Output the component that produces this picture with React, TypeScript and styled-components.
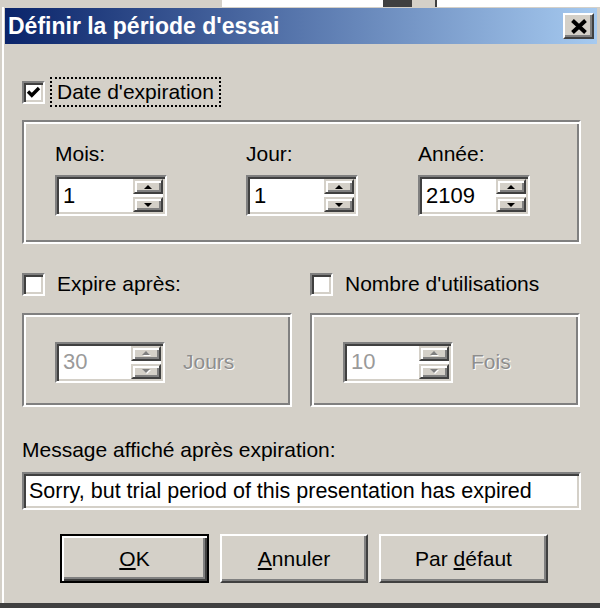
import styled, { createGlobalStyle, css } from 'styled-components';

const face = '#d4d0c8';
const shade = '#808080';
const darkShade = '#404040';
const uiFont = '"Liberation Sans", Arial, sans-serif';

const GlobalStyle = createGlobalStyle`
  html, body {
    margin: 0;
    padding: 0;
    background: ${face};
  }
  body {
    font-family: ${uiFont};
    font-size: 21px;
    color: #000;
  }
`;

const Screen = styled.div`
  width: 600px;
  height: 608px;
  overflow: hidden;
  display: flex;
  flex-direction: column;
`;

const BehindStrip = styled.div`
  flex: none;
  height: 7px;
  display: flex;
`;

const StripPart = styled.div<{ $w?: number; $c: string }>`
  background: ${(p) => p.$c};
  ${(p) => (p.$w ? css`width: ${p.$w}px;` : css`flex: 1;`)}
`;

const Window = styled.div`
  flex: 1;
  display: flex;
  flex-direction: column;
  padding: 1px 3px 0 5px;
  background: ${face};
  box-shadow: inset 0 -5px ${darkShade}, inset 2px 0 ${face}, inset 4px 0 #fff;
`;

const TitleBar = styled.div`
  flex: none;
  height: 36px;
  display: flex;
  align-items: center;
  justify-content: space-between;
  padding: 0 3px;
  background: linear-gradient(90deg, #0a246a 0%, #a6caf0 100%);
`;

const TitleText = styled.span`
  color: #fff;
  font: bold 23px ${uiFont};
  white-space: nowrap;
`;

const raised = css`
  background: ${face};
  box-sizing: border-box;
  border: 2px solid;
  border-color: #fff ${darkShade} ${darkShade} #fff;
  box-shadow: inset -2px -2px ${shade};
`;

const sunken = css`
  box-sizing: border-box;
  border: 2px solid;
  border-color: ${shade} #fff #fff ${shade};
  box-shadow: inset 2px 2px ${darkShade}, inset -2px -2px ${face};
  background: #fff;
`;

const CloseButton = styled.div`
  ${raised}
  width: 31px;
  height: 26px;
  display: flex;
  align-items: center;
  justify-content: center;
`;

const Body = styled.div`
  display: flex;
  flex-direction: column;
  padding: 33px 16px 0 17px;
`;

const CheckLine = styled.div`
  display: flex;
  align-items: center;
  height: 30px;
`;

const CheckBox = styled.span`
  ${sunken}
  flex: none;
  width: 23px;
  height: 23px;
  display: flex;
  align-items: center;
  justify-content: center;
`;

const CheckLabel = styled.span<{ $focused?: boolean }>`
  margin-left: 5px;
  padding: 0 5px;
  height: 30px;
  box-sizing: border-box;
  border: 2px dotted ${(p) => (p.$focused ? '#000' : 'transparent')};
  display: flex;
  align-items: center;
  white-space: nowrap;
`;

const Frame = styled.div<{ $h: number }>`
  height: ${(p) => p.$h}px;
  box-sizing: border-box;
  border: 2px solid;
  border-color: ${shade} #fff #fff ${shade};
  box-shadow: inset 2px 2px #fff, inset -2px -2px ${shade};
`;

const DateGroup = styled(Frame)`
  margin-top: 13px;
  padding: 20px 0 0 31px;
  display: grid;
  grid-template-columns: 191px 172px 1fr;
`;

const FieldColumn = styled.div`
  display: flex;
  flex-direction: column;
  gap: 9px;
`;

const FieldLabel = styled.span`
  line-height: 24px;
  height: 24px;
`;

const TwoColumns = styled.div<{ $top: number }>`
  display: grid;
  grid-template-columns: 270px 270px;
  column-gap: 18px;
  margin-top: ${(p) => p.$top}px;
`;

const LimitGroup = styled(Frame)`
  display: flex;
  align-items: center;
  gap: 18px;
  padding: 4px 0 0 31px;
`;

const SpinBox = styled.div<{ $w: number }>`
  ${sunken}
  width: ${(p) => p.$w}px;
  height: 41px;
  display: flex;
  padding: 2px;
`;

const SpinValue = styled.span<{ $disabled?: boolean }>`
  flex: 1;
  display: flex;
  align-items: center;
  padding-left: 4px;
  font-size: 22px;
  color: ${(p) => (p.$disabled ? '#9a9a9a' : '#000')};
`;

const SpinButtons = styled.div`
  flex: none;
  width: 30px;
  display: flex;
  flex-direction: column;
  gap: 3px;
`;

const SpinButton = styled.div`
  flex: 1;
  box-sizing: border-box;
  background: ${face};
  border: 2px solid;
  border-color: ${face} ${darkShade} ${darkShade} ${face};
  box-shadow: inset 2px 2px #fff, inset -2px -2px ${shade};
  display: flex;
  align-items: center;
  justify-content: center;
`;

const Arrow = styled.span<{ $down?: boolean; $disabled?: boolean }>`
  width: 0;
  height: 0;
  border-left: 4px solid transparent;
  border-right: 4px solid transparent;
  ${(p) =>
    p.$down
      ? css`border-top: 4px solid ${p.$disabled ? shade : '#000'};`
      : css`border-bottom: 4px solid ${p.$disabled ? shade : '#000'};`}
  ${(p) => p.$disabled && css`filter: drop-shadow(1px 1px 0 #fff);`}
`;

const DisabledText = styled.span`
  color: #8e8e8e;
  text-shadow: 1px 1px 0 #fff;
`;

const MessageLabel = styled.span`
  margin-top: 31px;
  line-height: 24px;
  white-space: nowrap;
`;

const MessageInput = styled.div`
  ${sunken}
  margin-top: 10px;
  height: 38px;
  display: flex;
  align-items: center;
  padding-left: 5px;
  font-size: 21.5px;
  white-space: nowrap;
  overflow: hidden;
`;

const ButtonRow = styled.div`
  display: flex;
  gap: 11px;
  margin: 24px 0 0 38px;
`;

const PushButton = styled.div<{ $w: number; $default?: boolean }>`
  width: ${(p) => p.$w}px;
  height: 49px;
  box-sizing: border-box;
  background: ${face};
  display: flex;
  align-items: center;
  justify-content: center;
  font-size: 21px;
  ${(p) =>
    p.$default
      ? css`
          border: 2px solid #000;
          box-shadow: inset 2px 2px #fff, inset -2px -2px ${darkShade}, inset -4px -4px ${shade};
        `
      : css`
          border: 2px solid;
          border-color: #fff ${darkShade} ${darkShade} #fff;
          box-shadow: inset -2px -2px ${shade};
        `}
`;

const Spin = ({ value, width, disabled }: { value: string; width: number; disabled?: boolean }) => (
  <SpinBox $w={width}>
    <SpinValue $disabled={disabled}>{value}</SpinValue>
    <SpinButtons>
      <SpinButton>
        <Arrow $disabled={disabled} />
      </SpinButton>
      <SpinButton>
        <Arrow $down $disabled={disabled} />
      </SpinButton>
    </SpinButtons>
  </SpinBox>
);

const CheckMark = () => (
  <svg width="15" height="15" viewBox="0 0 15 15">
    <polyline points="2,6.5 5.8,10.3 13,3" fill="none" stroke="#000" strokeWidth="3.4" />
  </svg>
);

const CloseGlyph = () => (
  <svg width="18" height="15" viewBox="0 0 18 15">
    <path d="M2.5 1.5 L15.5 13.5 M15.5 1.5 L2.5 13.5" stroke="#000" strokeWidth="4" />
  </svg>
);

const App = () => (
  <Screen>
    <GlobalStyle />
    <BehindStrip>
      <StripPart $w={222} $c={face} />
      <StripPart $w={161} $c="#fff" />
      <StripPart $w={29} $c={darkShade} />
      <StripPart $w={23} $c={face} />
      <StripPart $w={2} $c={darkShade} />
      <StripPart $c="#fff" />
    </BehindStrip>
    <Window>
      <TitleBar>
        <TitleText>Définir la période d'essai</TitleText>
        <CloseButton>
          <CloseGlyph />
        </CloseButton>
      </TitleBar>
      <Body>
        <CheckLine>
          <CheckBox>
            <CheckMark />
          </CheckBox>
          <CheckLabel $focused>Date d'expiration</CheckLabel>
        </CheckLine>
        <DateGroup $h={124}>
          <FieldColumn>
            <FieldLabel>Mois:</FieldLabel>
            <Spin value="1" width={112} />
          </FieldColumn>
          <FieldColumn>
            <FieldLabel>Jour:</FieldLabel>
            <Spin value="1" width={112} />
          </FieldColumn>
          <FieldColumn>
            <FieldLabel>Année:</FieldLabel>
            <Spin value="2109" width={112} />
          </FieldColumn>
        </DateGroup>
        <TwoColumns $top={25}>
          <CheckLine>
            <CheckBox />
            <CheckLabel>Expire après:</CheckLabel>
          </CheckLine>
          <CheckLine>
            <CheckBox />
            <CheckLabel>Nombre d'utilisations</CheckLabel>
          </CheckLine>
        </TwoColumns>
        <TwoColumns $top={14}>
          <LimitGroup $h={94}>
            <Spin value="30" width={110} disabled />
            <DisabledText>Jours</DisabledText>
          </LimitGroup>
          <LimitGroup $h={94}>
            <Spin value="10" width={110} disabled />
            <DisabledText>Fois</DisabledText>
          </LimitGroup>
        </TwoColumns>
        <MessageLabel>Message affiché après expiration:</MessageLabel>
        <MessageInput>Sorry, but trial period of this presentation has expired</MessageInput>
        <ButtonRow>
          <PushButton $w={149} $default>
            <span>
              <u>O</u>K
            </span>
          </PushButton>
          <PushButton $w={148}>
            <span>
              <u>A</u>nnuler
            </span>
          </PushButton>
          <PushButton $w={169}>
            <span>
              Par <u>d</u>éfaut
            </span>
          </PushButton>
        </ButtonRow>
      </Body>
    </Window>
  </Screen>
);

export default App;
